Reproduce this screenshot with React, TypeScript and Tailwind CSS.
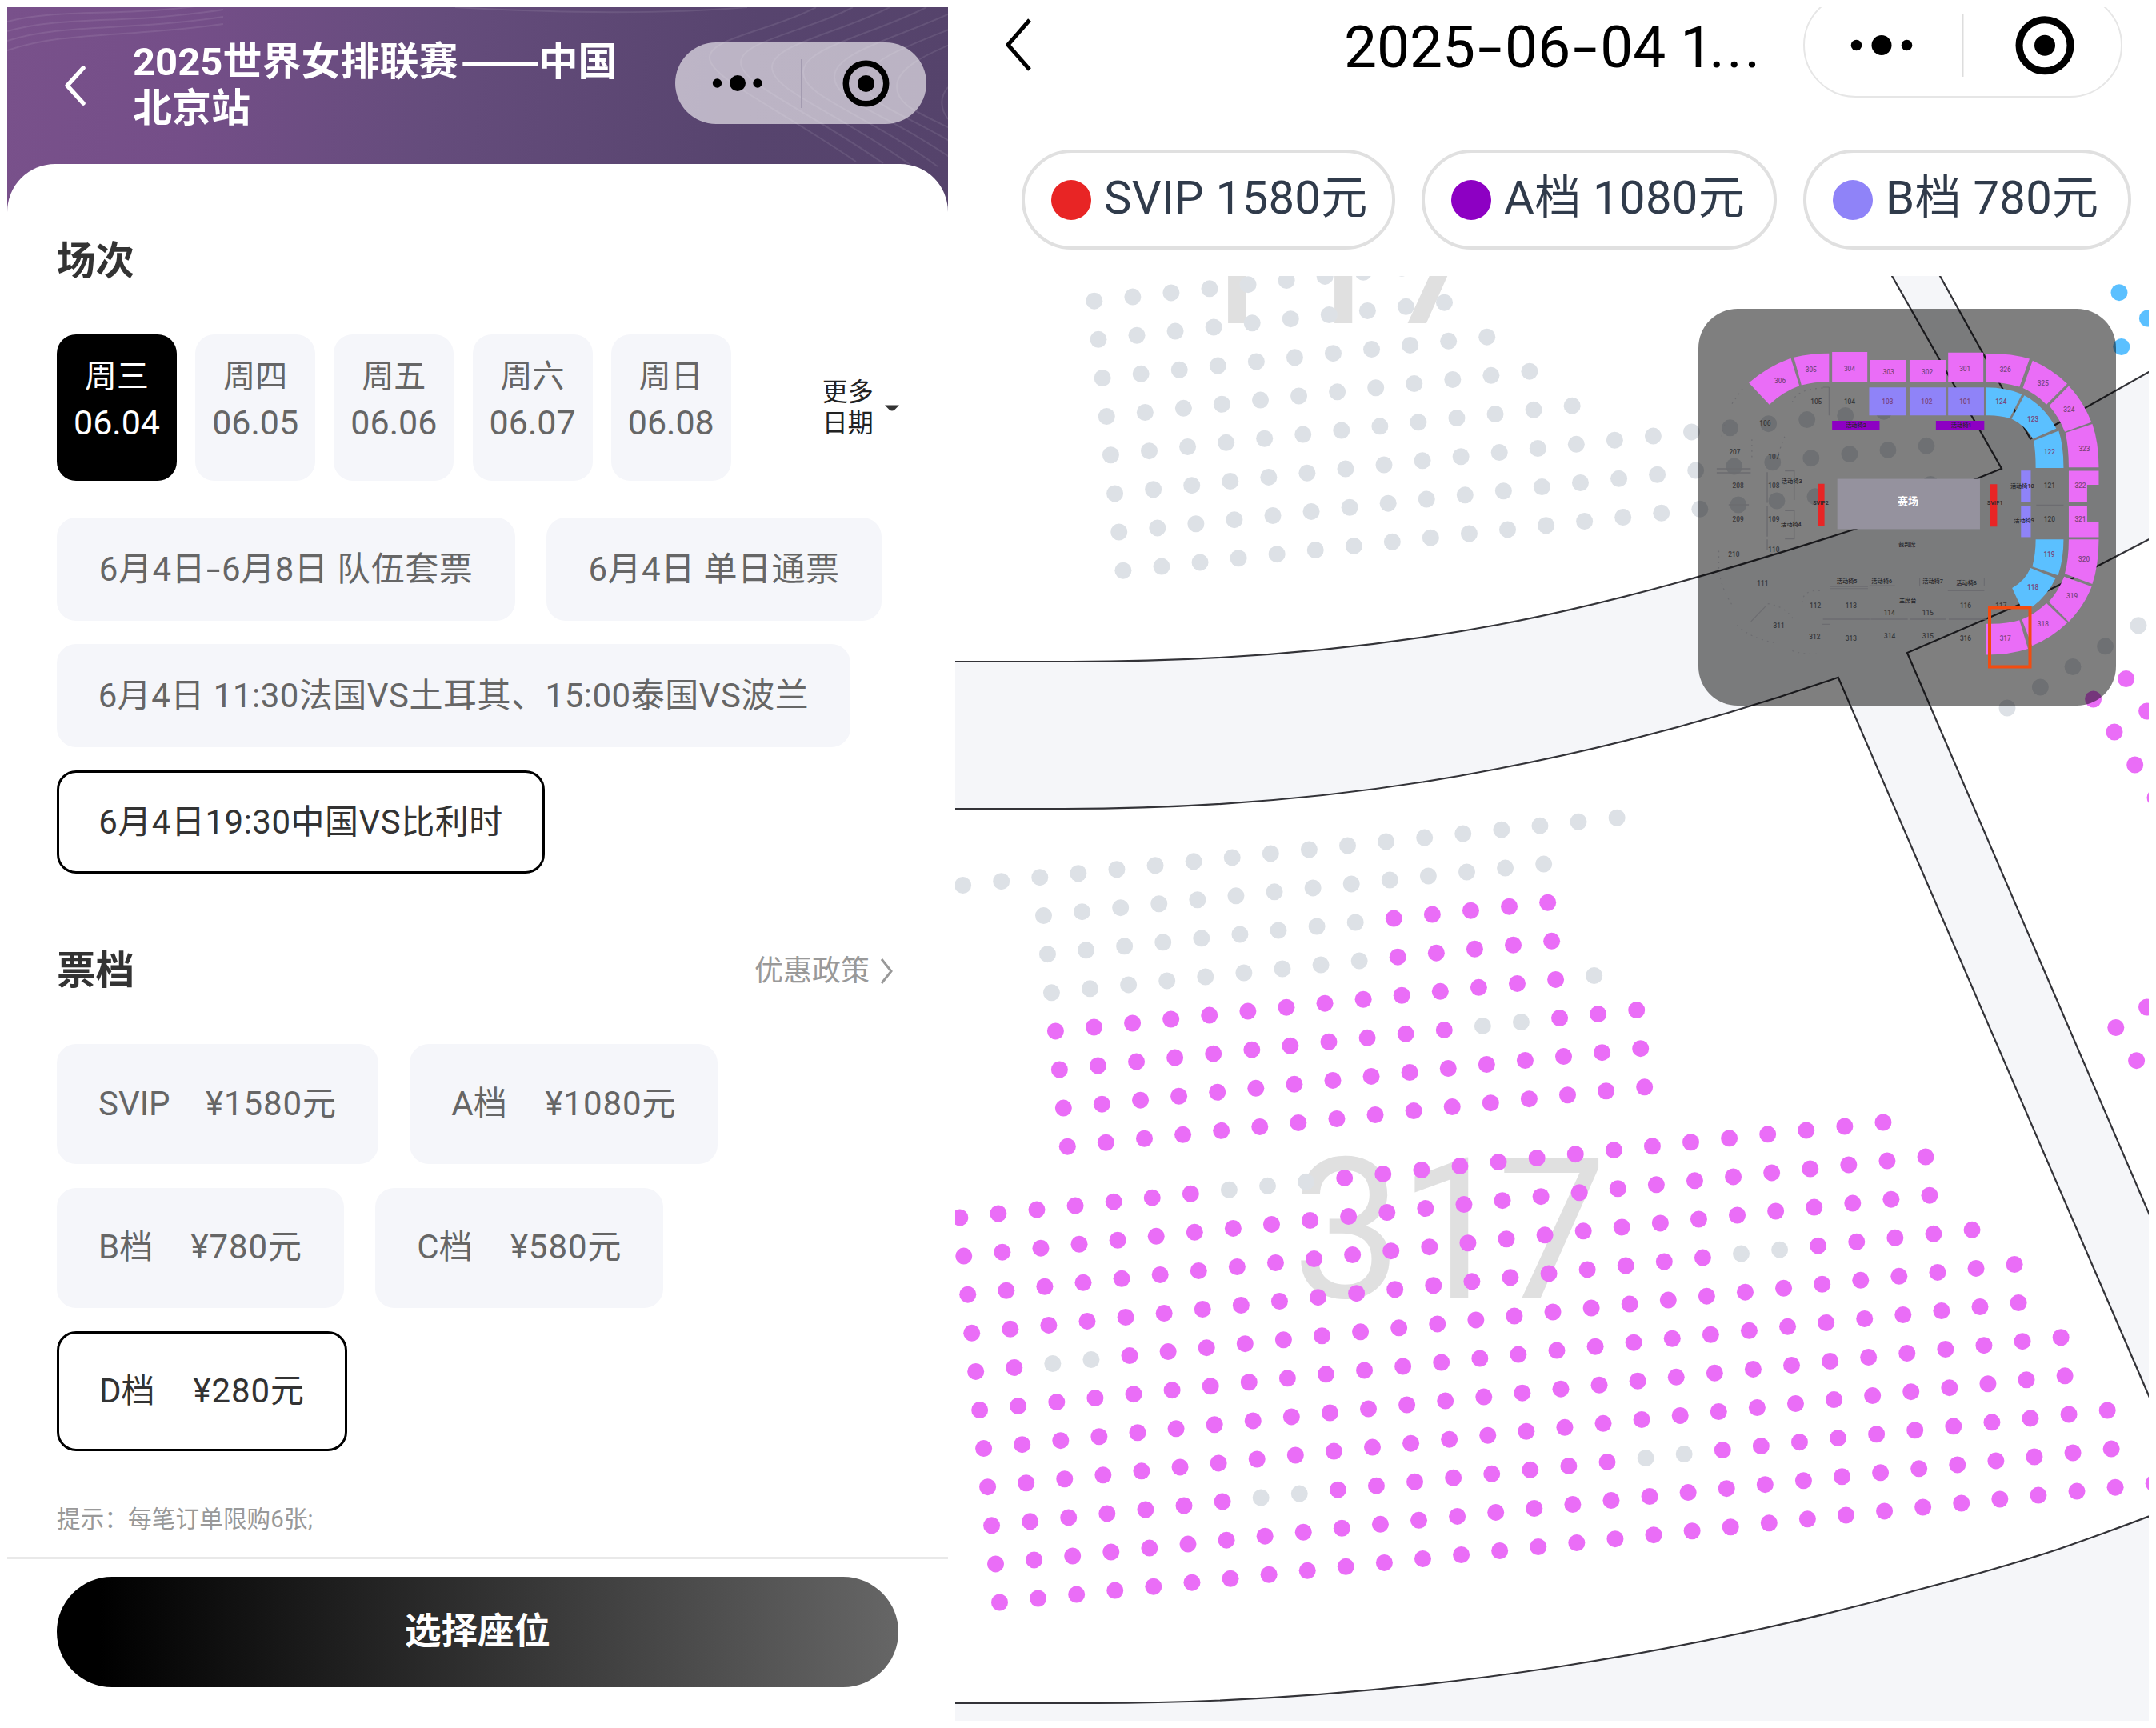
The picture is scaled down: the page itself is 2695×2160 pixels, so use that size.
import React from 'react';

const FONT = "font-[Roboto,'Noto_Sans_CJK_SC',sans-serif]";

const PINK = '#ea6df7';
const GREY = '#dde1e6';
const BLUE = '#5bc0ff';
const LILAC = '#8f83f8';
const PURPLE = '#8d00c3';
const RED = '#e82525';

/* ---------- Ticket picker ---------- */

const days = [
  ['周三', '06.04'],
  ['周四', '06.05'],
  ['周五', '06.06'],
  ['周六', '06.07'],
  ['周日', '06.08'],
];

const hyphen = <span className="inline-block w-[20px] scale-x-150 text-center">-</span>;

const sessions = [
  { id: 'team', label: <>6月4日{hyphen}6月8日 队伍套票</>, size: 'w-[573px]', active: false },
  { id: 'day', label: '6月4日 单日通票', size: 'w-[419px]', active: false },
  { id: 'noon', label: '6月4日 11:30法国VS土耳其、15:00泰国VS波兰', size: 'w-[992px]', active: false },
  { id: 'evening', label: '6月4日19:30中国VS比利时', size: 'w-[610px]', active: true },
];

const tiers = [
  { name: 'SVIP', price: '¥1580元', size: 'w-[402px]', active: false },
  { name: 'A档', price: '¥1080元', size: 'w-[385px]', active: false },
  { name: 'B档', price: '¥780元', size: 'w-[359px]', active: false },
  { name: 'C档', price: '¥580元', size: 'w-[360px]', active: false },
  { name: 'D档', price: '¥280元', size: 'w-[363px]', active: true },
];

function Contours() {
  return (
    <svg className="absolute inset-0" width="1176" height="256" viewBox="0 0 1176 256" fill="none" stroke="#fff" strokeOpacity="0.09" strokeWidth="2">
      {[0, 1, 2, 3].map((i) => (
        <path key={i} d={`M0 ${18 + i * 12} C70 ${i * 10} 150 ${14 + i * 8} 270 ${-6 + i * 9}`} />
      ))}
      <path d="M560 0 C700 8 830 8 925 0" />
      {[0, 1, 2, 3, 4, 5, 6].map((i) => (
        <path
          key={i}
          d={`M${1011 + i * 46} 0 C${960 + i * 41} ${28 + i * 2} ${878 + i * 39} ${38 + i * 4} ${878 + i * 39} ${63 + i * 6} S${960 + i * 36} ${124 + i * 2} ${1061 + i * 34} ${193 + i * 2}`}
        />
      ))}
      <path d="M1176 100 C1166 112 1166 126 1176 140" />
    </svg>
  );
}

function TicketPanel() {
  return (
    <section className="relative flex h-[2142px] w-[1176px] flex-none flex-col overflow-hidden bg-white">
      <header className="relative flex h-[196px] flex-none items-start">
        <div className="absolute inset-x-0 top-0 h-[256px] bg-[linear-gradient(97deg,#79518b_0%,#744e88_20%,#654c7c_45%,#57446e_78%,#55436b_100%)]">
          <Contours />
        </div>
        <svg className="relative ml-[68px] mt-[71px]" width="34" height="54" viewBox="0 0 34 54" fill="none" stroke="#fff" strokeWidth="5.5" strokeLinecap="round" strokeLinejoin="round">
          <path d="M27 5 L7 27 L27 49" />
        </svg>
        <h1 className="relative ml-[55px] mt-[39px] w-[640px] whitespace-nowrap text-[49px] font-bold leading-[58px] text-white">
          2025世界女排联赛
          <span className="inline-block w-[101px] origin-left scale-x-[1.2] pl-[3px] font-['Noto_Sans_CJK_SC'] leading-none">——</span>
          中国
          <br />
          北京站
        </h1>
        <div className="relative ml-[38px] mt-[44px] flex h-[102px] w-[314px] items-center justify-center rounded-full bg-white/60">
          <svg width="310" height="98" viewBox="0 0 310 98">
            <circle cx="50.500" cy="49" r="5.700" />
            <circle cx="76" cy="49" r="10" />
            <circle cx="101" cy="49" r="5.700" />
            <path d="M156 19V80" stroke="#a39bb0" strokeWidth="2" />
            <circle cx="236.500" cy="49.500" r="25.200" fill="none" stroke="#000" strokeWidth="7.500" />
            <circle cx="236.500" cy="49.500" r="10.500" />
          </svg>
        </div>
      </header>

      <div className="relative flex flex-1 flex-col rounded-t-[60px] bg-white pl-[62px]">
        <h2 className="mt-[92px] text-[48.500px] font-bold leading-[60px] text-[#333]">场次</h2>

        <div className="mt-[61px] flex">
          <div className="flex gap-[23.200px]">
            {days.map(([day, date], i) => (
              <div
                key={day}
                className={`flex h-[183px] w-[150px] flex-col items-center rounded-[24px] pt-[24px] leading-[58px] ${
                  i === 0 ? 'bg-black text-white' : 'bg-[#f5f6fa] text-[#666]'
                }`}
              >
                <span className="text-[40px]">{day}</span>
                <span className="-mt-px text-[43px]">{date}</span>
              </div>
            ))}
          </div>
          <div className="ml-[114px] flex items-center">
            <div className="text-[32px] leading-[38.500px] text-[#222]">
              更多
              <br />
              日期
            </div>
            <svg className="ml-[14px]" width="18" height="8" viewBox="0 0 18 8" fill="#333">
              <path d="M0 0.500H18L12 6.500Q9 8.500 6 6.500Z" />
            </svg>
          </div>
        </div>

        <div className="mt-[46px] flex w-[1080px] flex-wrap gap-x-[39px] gap-y-[29px]">
          {sessions.map((s) => (
            <div
              key={s.id}
              className={`flex h-[129px] items-center justify-center whitespace-pre rounded-[24px] text-[42px] tracking-[0.500px] ${s.size} ${
                s.active ? 'border-[3px] border-black text-[#333]' : 'bg-[#f5f6fa] text-[#666]'
              }`}
            >
              <span>{s.label}</span>
            </div>
          ))}
        </div>

        <div className="mt-[92px] flex items-center">
          <h2 className="w-[872px] text-[48.500px] font-bold leading-[60px] text-[#333]">票档</h2>
          <span className="text-[36px] leading-[60px] text-[#999]">优惠政策</span>
          <svg className="ml-[11px]" width="20" height="36" viewBox="0 0 20 36" fill="none" stroke="#999" strokeWidth="3">
            <path d="M4 3 L16 18 L4 33" />
          </svg>
        </div>

        <div className="mt-[61px] flex w-[900px] flex-wrap gap-x-[39.300px] gap-y-[29.500px]">
          {tiers.map((t) => (
            <div
              key={t.name}
              className={`flex h-[150px] items-center justify-between whitespace-nowrap rounded-[24px] text-[42px] ${t.size} ${
                t.active ? 'border-[3px] border-black px-[50px] text-[#333]' : 'bg-[#f5f6fa] px-[52px] text-[#666]'
              }`}
            >
              <span className="-mt-[2px]">{t.name}</span>
              <span className="-mt-[2px] tracking-[0.900px]">{t.price}</span>
            </div>
          ))}
        </div>

        <p className="mt-[65px] text-[29.500px] leading-[40px] tracking-[0.200px] text-[#999]">提示：每笔订单限购6张;</p>
      </div>

      <footer className="relative h-[205px] flex-none border-t-[3px] border-[#e9e9e9] bg-white px-[62px] pt-[22px]">
        <button className="flex h-[138px] w-[1052px] items-center justify-center rounded-full bg-[linear-gradient(90deg,#000_5%,#666_100%)] text-[45.500px] font-bold text-white">
          选择座位
        </button>
      </footer>
    </section>
  );
}

/* ---------- Seat map ---------- */

type Row = { x: number; y: number; to: number; sold?: number[]; all?: boolean };

const range = (a: number, b: number) => Array.from({ length: b - a + 1 }, (_, i) => a + i);

const block117: Row[] = [8, 9, 10, 11, 12, 20, 21, 21].map((to, r) => ({
  x: 1367.8 + r * 5.16,
  y: 376.2 + r * 48.14,
  to,
  all: true,
}));

const upper: [number, number[]][] = [
  [13, range(0, 13)],
  [13, range(0, 8)],
  [13, range(0, 8)],
  [14, [14]],
  [15, [11, 12]],
  [15, []],
  [15, []],
];

const lower: [number, number[]][] = [
  [24, [7, 8, 9]],
  [25, []],
  [25, []],
  [26, [20, 21]],
  [27, [2, 3]],
  [27, []],
  [28, []],
  [28, []],
  [29, [7, 8, 17, 18]],
  [29, []],
  [30, []],
];

const block317: Row[] = [
  { x: 1203.6, y: 1106.6, to: 17, all: true },
  ...upper.map(([to, sold], r) => ({ x: 1304.5 + r * 4.97, y: 1144.6 + r * 48.1, to, sold })),
  ...lower.map(([to, sold], r) => ({ x: 1199.8 + r * 4.97, y: 1522 + r * 48.1, to, sold })),
];

const looseSeats: [number, number, string][] = [
  [2649, 365.7, BLUE],
  [2684.4, 398, BLUE],
  [2651.8, 433.6, BLUE],
  [2673, 781.8, GREY],
  [2631.6, 807.8, GREY],
  [2591, 833.5, GREY],
  [2550.4, 859, GREY],
  [2509, 885, GREY],
  [2657.6, 848.5, PINK],
  [2616.6, 874, PINK],
  [2683.6, 889, PINK],
  [2643, 915, PINK],
  [2668.7, 956, PINK],
  [2694, 997, PINK],
  [2683.5, 1259, PINK],
  [2644.8, 1284.5, PINK],
  [2670.6, 1325.7, PINK],
];

function Seats({ rows, dx, dy }: { rows: Row[]; dx: number; dy: number }) {
  return (
    <>
      {rows.map((row, r) =>
        range(0, row.to).map((c) => (
          <circle
            key={`${r}-${c}`}
            cx={row.x + c * dx}
            cy={row.y + c * dy}
            r="10.500"
            fill={row.all || row.sold?.includes(c) ? GREY : PINK}
          />
        )),
      )}
    </>
  );
}

/* Overview thumbnail is authored on its own 1568-unit grid. */
const SX = 600 / 1568;
const SY = 560 / 1568;

const dTiles = [
  'M238 332 Q300 275 375 246 L403 342 Q350 362 305 408Z',
  'M385 243 Q440 229 500 229 V328 Q450 328 410 340Z',
  'M510 224H625V328H510Z',
  'M633 252H752V328H633Z',
  'M763 252H881V328H763Z',
  'M889 226H1004V328H889Z',
  'M1013 230 Q1090 228 1155 248 L1122 346 Q1070 329 1013 329Z',
  'M1165 254 Q1228 284 1278 335 L1210 408 Q1175 370 1133 350Z',
  'M1283 343 Q1330 395 1357 470 L1270 503 Q1250 450 1219 412Z',
  'M1360 476 Q1381 540 1381 628 H1283 Q1283 560 1272 507Z',
  'M1283 640H1381V689H1343V750H1283Z',
  'M1283 762H1343V820H1381V872H1283Z',
  'M1283 880H1381Q1381 970 1360 1036 L1270 1000 Q1283 950 1283 880Z',
  'M1358 1045 Q1332 1115 1283 1168 L1218 1098 Q1250 1060 1268 1010Z',
  'M1278 1172 Q1228 1225 1163 1252 L1130 1160 Q1175 1140 1210 1103Z',
  'M1013 1175 Q1075 1178 1122 1163 L1150 1263 Q1090 1284 1013 1284Z',
];
const cTiles = [
  'M1013 348 Q1080 348 1130 372 L1090 456 Q1050 444 1013 446Z',
  'M1138 376 Q1205 415 1242 492 L1166 528 Q1140 480 1096 458Z',
  'M1250 500 Q1266 550 1266 630 H1175 Q1175 570 1168 535Z',
  'M1175 880H1266Q1266 950 1248 1006 L1164 975 Q1175 930 1175 880Z',
  'M1240 1016 Q1215 1075 1165 1115 L1125 1112 L1098 1050 Q1140 1025 1158 980Z',
];
const bTiles = [
  'M631 348H752V446H631Z',
  'M763 348H881V446H763Z',
  'M889 348H1006V446H889Z',
  'M1127 639H1159V750H1127Z',
  'M1127 762H1159V872H1127Z',
];

const tileLabels: [string, number, number][] = [
  ['306', 340, 325], ['305', 441, 285], ['304', 567, 282], ['303', 694, 293], ['302', 821, 293],
  ['301', 944, 282], ['326', 1076, 285], ['325', 1199, 334], ['324', 1284, 427], ['323', 1334, 562],
  ['322', 1321, 692], ['321', 1321, 810], ['320', 1333, 949], ['319', 1294, 1079], ['318', 1199, 1177],
  ['317', 1076, 1226], ['103', 691, 399], ['102', 819, 399], ['101', 944, 399], ['124', 1062, 399],
  ['123', 1166, 460], ['122', 1220, 575], ['119', 1219, 933], ['118', 1166, 1046],
];
const greyLabels: [string, number, number][] = [
  ['105', 458, 399], ['104', 567, 399], ['106', 291, 472], ['207', 192, 575], ['107', 320, 590],
  ['208', 203, 692], ['108', 320, 692], ['209', 203, 810], ['109', 320, 810], ['210', 189, 933],
  ['110', 320, 916], ['111', 283, 1034], ['112', 455, 1113], ['113', 572, 1113], ['114', 697, 1137],
  ['115', 823, 1137], ['116', 946, 1113], ['117', 1062, 1113], ['311', 336, 1183], ['312', 453, 1222],
  ['313', 572, 1226], ['314', 698, 1219], ['315', 823, 1219], ['316', 946, 1226], ['121', 1220, 692],
  ['120', 1220, 810],
];
const boxLabels: [string, number, number][] = [
  ['活动椅2', 588, 480], ['活动椅1', 932, 480], ['活动椅3', 378, 677], ['活动椅4', 376, 827],
  ['SVIP2', 473, 752], ['SVIP1', 1042, 752], ['活动椅10', 1131, 692], ['活动椅9', 1137, 814],
  ['裁判席', 755, 898], ['活动椅5', 558, 1026], ['活动椅6', 672, 1026], ['活动椅7', 839, 1026],
  ['活动椅8', 949, 1032], ['主席台', 757, 1093],
];

function Labels({ items, size, color, weight }: { items: [string, number, number][]; size: number; color: string; weight: number }) {
  return (
    <g fontSize={size} fill={color} fontWeight={weight} textAnchor="middle">
      {items.map(([t, x, y]) => (
        <text key={t} x={2095 + x * SX} y={360 + y * SY + size * 0.36}>
          {t}
        </text>
      ))}
    </g>
  );
}

function Overview() {
  return (
    <g>
      <rect x="2123" y="386" width="522" height="496" rx="49" fill="#000" fillOpacity="0.5" />
      <g transform={`translate(2095 360) scale(${SX} ${SY})`}>
        <g fill="none" stroke="#6c6c70" strokeWidth="4">
          <path d="M133 633H244M133 647H244M172 759H238M298 645V752M298 762V870M298 880V916M356 640H386V742M356 779H386V878H356" />
          <path d="M502 1045H627M502 1052H627M632 1042H715M796 1015V1042M888 1060H1007M1007 1015V1042" strokeWidth="3" />
          <path d="M480 1159H632M636 1159H757M765 1159H881M891 1159H1015M476 1177H502M1177 760H1266" />
          <path d="M500 347V446M480 347H500" strokeWidth="3" />
          <path d="M245 1167L292 1115" strokeWidth="3" />
          <path d="M183 405L222 345M380 400Q390 355 480 350M150 520Q150 490 165 470M248 530V600M355 520Q340 560 335 580M140 920V990Q150 1060 190 1120M200 1180Q240 1225 325 1242M380 1270Q420 1284 470 1280M412 1100Q415 1055 470 1060M300 1105Q350 1110 385 1160" strokeWidth="3" strokeDasharray="5 14" />
        </g>
        <g fill={PINK}>{dTiles.map((d) => <path key={d} d={d} />)}</g>
        <g fill={BLUE}>{cTiles.map((d) => <path key={d} d={d} />)}</g>
        <g fill={LILAC}>{bTiles.map((d) => <path key={d} d={d} />)}</g>
        <path d="M510 465H665V497H510ZM849 465H1007V496H849Z" fill={PURPLE} />
        <path d="M463 685H485V832H463ZM1027 687H1049V835H1027Z" fill={RED} />
        <rect x="527" y="668" width="466" height="176" fill="#95929e" />
      </g>
      <Labels items={tileLabels} size={8.3} color="#7a4482" weight={500} />
      <Labels items={greyLabels} size={8.3} color="#38383a" weight={500} />
      <Labels items={boxLabels} size={7.2} color="#26262a" weight={500} />
      <text x={2095 + 758 * SX} y="631" fontSize="13" fontWeight="600" fill="#fff" textAnchor="middle">赛场</text>
      <rect x="2487" y="759.500" width="50.500" height="74" fill="none" stroke="#f24c10" strokeWidth="4" />
    </g>
  );
}

function SeatMap() {
  return (
    <svg className={`block flex-none ${FONT}`} width="1492" height="1806" viewBox="1194 345 1492 1806">
      <rect x="1194" y="345" width="1492" height="1806" fill="#f5f6f9" />
      <g fill="#fff" stroke="#333338" strokeWidth="2.200">
        <path d="M1180 827 H1340 C1517 827 1695 814 1872 781 C2021 753 2171 709 2320 661 L2468 599.500 L2502 585.700 L2365 345 V330 H1180Z" />
        <path d="M2425 345 L2538 548.500 L2700 457 V330 H2416Z" />
        <path d="M2700 667 L2623 707 L2523.600 756 L2384 816 L2700 1549Z" />
        <path d="M1180 1011 H1330 C1511 1011 1691 996.500 1872 961 C2014 934 2156 896 2297.800 846.800 L2700 1777 V1890 C2660 1906 2589 1931 2566.800 1938.500 C2510 1957 2452 1973 2394.600 1988 C2245 2030 2095 2060.500 1945 2084 C1753 2113 1562 2129 1370 2129 H1180Z" />
      </g>
      <g fontSize="245" fill="#e0e0e0">
        <text x="1470 1603 1728" y="404">117</text>
        <text x="1615 1748 1871" y="1622">317</text>
      </g>
      <Seats rows={block117} dx={48.06} dy={-5.13} />
      <Seats rows={block317} dx={48.09} dy={-4.96} />
      {looseSeats.map(([x, y, c]) => (
        <circle key={`${x}`} cx={x} cy={y} r="10.500" fill={c} />
      ))}
      <Overview />
    </svg>
  );
}

const legend = [
  { label: 'SVIP 1580元', size: 'w-[467px]', dot: 'bg-[#e82525]' },
  { label: 'A档 1080元', size: 'w-[444px]', dot: 'bg-[#8d00c3]' },
  { label: 'B档 780元', size: 'w-[410px]', dot: 'bg-[#8f83f8]' },
];

const wideHyphen = <span className="inline-block w-[37px] scale-x-150 text-center">-</span>;

function SeatPanel() {
  return (
    <section className="flex h-[2142px] w-[1492px] flex-none flex-col overflow-hidden bg-white">
      <header className="flex h-[94px] flex-none items-center">
        <svg className="ml-[59px]" width="40" height="70" viewBox="0 0 40 70" fill="none" stroke="#000" strokeWidth="5" strokeLinejoin="round">
          <path d="M34 4 L7 35 L34 66" />
        </svg>
        <div className="ml-[387px] mt-[6px] w-[540px] whitespace-nowrap text-[73px] leading-[94px] text-black">
          2025{wideHyphen}06{wideHyphen}04 <span className="tracking-[-5px]">1</span><span className="tracking-[3px]">...</span>
        </div>
        <div className="ml-[34px] h-[131px] w-[399px] flex-none rounded-full border-2 border-[#e6e6e6]">
          <svg width="394" height="127" viewBox="0 0 394 127">
            <circle cx="64.500" cy="63.500" r="6.800" />
            <circle cx="96" cy="63.500" r="12.500" />
            <circle cx="127.500" cy="63.500" r="6.800" />
            <path d="M197.500 25V103" stroke="#ddd" strokeWidth="2" />
            <circle cx="300" cy="63.800" r="32" fill="none" stroke="#000" strokeWidth="9" />
            <circle cx="300" cy="63.800" r="13" />
          </svg>
        </div>
      </header>
      <div className="ml-[83px] mt-[84px] flex flex-none gap-[33px]">
        {legend.map((l) => (
          <div
            key={l.label}
            className={`flex h-[125px] items-center whitespace-nowrap rounded-full border-4 border-[#e0e0e0] pl-[33px] text-[58px] tracking-[0.300px] text-[#303b4b] ${l.size}`}
          >
            <span className={`mr-[16px] h-[50px] w-[50px] flex-none rounded-full ${l.dot}`} />
            <span className="-mt-[4px]">{l.label}</span>
          </div>
        ))}
      </div>
      <div className="mt-[33px] flex-none">
        <SeatMap />
      </div>
    </section>
  );
}

export default function App() {
  return (
    <main className={`flex h-[2160px] w-[2695px] gap-[9px] overflow-hidden bg-white pl-[9px] pt-[9px] ${FONT}`}>
      <TicketPanel />
      <SeatPanel />
    </main>
  );
}
